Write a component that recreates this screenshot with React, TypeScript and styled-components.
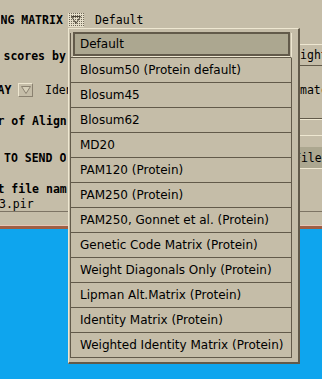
import styled, { createGlobalStyle } from 'styled-components'

const beige = '#c5bda8'
const light = '#eee7d1'
const dark = '#625a4a'
const sel = '#aca790'
const sky = '#0ea5ee'

const GlobalStyle = createGlobalStyle`
  html, body {
    margin: 0;
    padding: 0;
  }
  body {
    background: ${sky};
    overflow: hidden;
  }
`

const Screen = styled.div`
  position: relative;
  width: 322px;
  height: 379px;
  overflow: hidden;
  background: ${sky};
  font-family: "DejaVu Sans Mono", "Liberation Mono", monospace;
  font-size: 11.5px;
  color: #000;
`

const Panel = styled.div`
  height: 225px;
  background: ${beige};
  display: flex;
  flex-direction: column;
`

const Rim = styled.div`
  height: 4px;
  box-sizing: border-box;
  border-top: 1px solid #e6c5b5;
  background: #9e5f45;
`

const Row = styled.div<{ $h: number; $line?: boolean }>`
  flex: none;
  height: ${p => p.$h}px;
  box-sizing: border-box;
  display: flex;
  align-items: center;
  white-space: nowrap;
  ${p => p.$line ? `border-bottom: 1px solid #7d7464;` : ''}
`

const Label = styled.span<{ $bold?: boolean; $indent?: number; $w?: number }>`
  flex: ${p => p.$w ? `0 0 ${p.$w - (p.$indent ?? 0)}px` : 'none'};
  margin-left: ${p => p.$indent ?? 0}px;
  font-weight: ${p => p.$bold ? 700 : 400};
  overflow: hidden;
`

const Value = styled.span<{ $gap: number }>`
  margin-left: ${p => p.$gap}px;
`

const StippleButton = styled.div`
  flex: none;
  width: 16px;
  height: 14px;
  display: flex;
  align-items: center;
  justify-content: center;
  background: conic-gradient(#6f6858 0 25%, #e6dfca 0 100%) 0 0 / 2px 2px;
`

const OptionButton = styled.div`
  flex: none;
  width: 15px;
  height: 14px;
  box-sizing: border-box;
  display: flex;
  align-items: center;
  justify-content: center;
  border-top: 1px solid ${light};
  border-left: 1px solid ${light};
  border-right: 1px solid #8a8170;
  border-bottom: 1px solid #8a8170;
`

const EdgeButton = styled.div`
  margin-left: auto;
  margin-right: -30px;
  align-self: flex-start;
  margin-top: 4px;
  width: 90px;
  height: 22px;
  box-sizing: border-box;
  display: flex;
  align-items: center;
  justify-content: center;
  border-top: 1px solid ${light};
  border-left: 1px solid ${light};
  border-right: 1px solid ${dark};
  border-bottom: 1px solid ${dark};
`

const EdgeText = styled.span`
  margin-left: auto;
  margin-right: -26px;
  width: 48px;
  padding-left: 0.5px;
  overflow: hidden;
`

const Etch = styled.div`
  margin-left: auto;
  margin-right: -8px;
  align-self: flex-start;
  margin-top: 10px;
  width: 30px;
  height: 2px;
  box-sizing: border-box;
  border-top: 1px solid ${dark};
  border-bottom: 1px solid ${light};
`

const Frame = styled.div`
  margin-left: auto;
  margin-right: -30px;
  align-self: flex-start;
  margin-top: 1px;
  width: 80px;
  border-top: 1px solid ${light};
  padding-top: 11px;
`

const Field = styled.div`
  height: 21px;
  padding-left: 22px;
  display: flex;
  align-items: center;
  background: ${sel};
  border-bottom: 1px solid ${light};
`

const Menu = styled.div`
  position: absolute;
  left: 68px;
  top: 28px;
  width: 232px;
  height: 336px;
  box-sizing: border-box;
  padding: 4px 6px 4px 1px;
  background: ${beige};
  border-top: 1px solid ${light};
  border-left: 1px solid ${light};
  border-right: 2px solid ${dark};
  border-bottom: 2px solid ${dark};
  font-family: "DejaVu Sans", "Liberation Sans", sans-serif;
  font-size: 12px;
`

const MenuList = styled.div`
  height: 100%;
  display: flex;
  flex-direction: column;
  border-left: 1px solid ${dark};
`

const Item = styled.div<{ $current?: boolean }>`
  flex: none;
  height: 25px;
  box-sizing: border-box;
  display: flex;
  align-items: center;
  padding-left: ${p => p.$current ? 0 : 9}px;
  border-bottom: 1px solid ${dark};
  border-right: 1px solid ${p => p.$current ? light : dark};
  white-space: nowrap;
`

const Current = styled.div`
  flex: 1;
  align-self: stretch;
  margin: -1px 1px 1px 2px;
  padding-left: 5px;
  display: flex;
  align-items: center;
  background: ${sel};
  border: 2px solid ${dark};
  box-shadow: 0 1px 0 ${light};
`

const DownTriangle = ({ color, fill = 'none' }: { color: string; fill?: string }) => (
  <svg width="10" height="8" viewBox="0 0 10 8">
    <path d="M0.5 0.5 H9.5 L5 7.5 Z" fill={fill} stroke={color} strokeWidth="1" />
  </svg>
)

const matrices = [
  'Blosum50 (Protein default)',
  'Blosum45',
  'Blosum62',
  'MD20',
  'PAM120 (Protein)',
  'PAM250 (Protein)',
  'PAM250, Gonnet et al. (Protein)',
  'Genetic Code Matrix (Protein)',
  'Weight Diagonals Only (Protein)',
  'Lipman Alt.Matrix (Protein)',
  'Identity Matrix (Protein)',
  'Weighted Identity Matrix (Protein)',
]

export default function App() {
  return (
    <Screen>
      <GlobalStyle />
      <Panel>
        <Row $h={40}>
          <Label $bold $indent={0.5} $w={68}>NG MATRIX</Label>
          <StippleButton>
            <DownTriangle color="#4a4336" />
          </StippleButton>
          <Value $gap={11}>Default</Value>
        </Row>
        <Row $h={32}>
          <Label $bold $indent={3.5}>scores by</Label>
          <EdgeButton>Weight</EdgeButton>
        </Row>
        <Row $h={36}>
          <Label $bold $indent={-2.5} $w={18}>AY</Label>
          <OptionButton>
            <DownTriangle color="#8a8170" fill="#d6cfb9" />
          </OptionButton>
          <Value $gap={12}>Iden</Value>
          <EdgeText>matches</EdgeText>
        </Row>
        <Row $h={26}>
          <Label $bold $indent={-2.5}>r of Align</Label>
          <Etch />
        </Row>
        <Row $h={47}>
          <Label $bold $indent={4}>TO SEND O</Label>
          <Frame>
            <Field>File</Field>
          </Frame>
        </Row>
        <Row $h={15}>
          <Label $bold $indent={-2.5}>t file nam</Label>
        </Row>
        <Row $h={16} $line>
          <Label $indent={-1}>3.pir</Label>
        </Row>
      </Panel>
      <Rim />

      <Menu>
        <MenuList>
          <Item $current>
            <Current>Default</Current>
          </Item>
          {matrices.map(name => (
            <Item key={name}>{name}</Item>
          ))}
        </MenuList>
      </Menu>
    </Screen>
  )
}
